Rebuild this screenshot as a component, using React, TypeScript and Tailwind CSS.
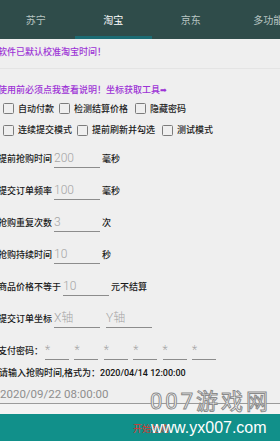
import React from "react";

function Box() {
  return <span className="w-[11px] h-[11px] flex-none border-[1.5px] border-[#7c7c7c] rounded-[1.5px]" />;
}

function Check({ label, w }: { label: string; w: string }) {
  return (
    <div className={`flex items-center gap-[4px] flex-none ${w}`}>
      <Box />
      <span className="text-[9px] leading-[12px] text-[#1c1c1c] font-medium whitespace-nowrap">{label}</span>
    </div>
  );
}

function Field({ value, w = "w-[46px]" }: { value: string; w?: string }) {
  return (
    <div className={`${w} h-[18px] flex-none border-b border-[#8c8c8c] text-[12px] leading-[16px] text-[#a5a5a5] font-light whitespace-nowrap`}>
      {value}
    </div>
  );
}

function Row({ children }: { children: React.ReactNode }) {
  return <div className="h-8 flex items-center gap-[2px] -ml-[2px]">{children}</div>;
}

function Label({ children }: { children: React.ReactNode }) {
  return <span className="text-[9px] leading-[12px] text-[#1a1a1a] font-medium whitespace-nowrap">{children}</span>;
}

export default function App() {
  const tabs = ["苏宁", "淘宝", "京东", "多功能"];
  return (
    <div className="relative w-[280px] h-[441px] overflow-hidden bg-[#efefef] font-['Roboto','Noto_Sans_CJK_SC',sans-serif]">
      <div className="h-[39px] bg-[#2f4c4a] overflow-hidden">
        <div className="flex h-full -ml-[3px]">
          {tabs.map((t, i) => (
            <div
              key={t}
              className={
                i === 1
                  ? "w-[77.5px] flex-none h-full flex items-center justify-center pt-[5px] border-b-[3px] border-[#1c6c74] text-white text-[10px]"
                  : "w-[77.5px] flex-none h-full flex items-center justify-center pt-[5px] border-b-[3px] border-transparent text-[#b9c6c3] text-[10px]"
              }
            >
              {t}
            </div>
          ))}
        </div>
      </div>

      <div className="h-[26px] flex items-center -ml-[2px]">
        <span className="text-[9px] leading-[12px] text-[#9d33d6] font-medium whitespace-nowrap">软件已默认校准淘宝时间！</span>
      </div>
      <div className="mt-[3px] h-px bg-[#e4e4e4]" />
      <div className="mt-[13px] h-[16px] flex items-center -ml-[2px]">
        <span className="text-[9px] leading-[12px] text-[#9d33d6] font-medium whitespace-nowrap">
          使用前必须点我查看说明！坐标获取工具<span className="text-[8px] font-['DejaVu_Sans',sans-serif]">➡</span>
        </span>
      </div>

      <div className="h-[21px] flex items-center pl-[3px]">
        <Check label="自动付款" w="w-[56px]" />
        <Check label="检测结算价格" w="w-[76px]" />
        <Check label="隐藏密码" w="w-[80px]" />
      </div>
      <div className="h-[22px] flex items-center pl-[3px]">
        <Check label="连续提交模式" w="w-[74px]" />
        <Check label="提前刷新并勾选" w="w-[85px]" />
        <Check label="测试模式" w="w-[80px]" />
      </div>

      <div className="mt-[2px]">
        <Row>
          <Label>提前抢购时间</Label>
          <Field value="200" />
          <Label>毫秒</Label>
        </Row>
        <Row>
          <Label>提交订单频率</Label>
          <Field value="100" />
          <Label>毫秒</Label>
        </Row>
        <Row>
          <Label>抢购重复次数</Label>
          <Field value="3" />
          <Label>次</Label>
        </Row>
        <Row>
          <Label>抢购持续时间</Label>
          <Field value="10" />
          <Label>秒</Label>
        </Row>
        <Row>
          <Label>商品价格不等于</Label>
          <Field value="10" />
          <Label>元不结算</Label>
        </Row>
        <Row>
          <Label>提交订单坐标</Label>
          <div className="flex gap-[6px]">
            <Field value="X轴" />
            <Field value="Y轴" />
          </div>
        </Row>
        <Row>
          <Label>支付密码：</Label>
          <div className="flex gap-[5.4px]">
            {[0, 1, 2, 3, 4, 5].map((k) => (
              <Field key={k} value="*" w="w-[24px]" />
            ))}
          </div>
        </Row>
      </div>

      <div className="h-[12px] flex items-center -ml-[1px]">
        <span className="text-[9px] leading-[12px] text-[#141414] font-medium whitespace-nowrap">请输入抢购时间,格式为：2020/04/14 12:00:00</span>
      </div>
      <div className="h-[25px] flex items-end pb-[2px] border-b border-[#9a9a9a]">
        <span className="text-[11.5px] leading-[14px] text-[#8e8e8e] whitespace-nowrap">2020/09/22 08:00:00</span>
      </div>
      <div className="h-[10px] bg-[#f3f3f3]" />
      <div className="h-[30px] bg-[#11908a] flex items-center justify-center pl-[22px]">
        <span className="text-[9px] leading-[12px] text-[#d8352f]">开始抢购</span>
      </div>

      <div className="absolute left-[150px] top-[391px] text-[22px] leading-[22px] tracking-[3px] text-white [-webkit-text-stroke:1px_#8a8a8a] whitespace-nowrap">
        007游戏网
      </div>
      <div className="absolute left-[151px] top-[419px] text-[16px] leading-[18px] text-white font-['Liberation_Sans',sans-serif] whitespace-nowrap">
        www.yx007.com
      </div>
    </div>
  );
}
